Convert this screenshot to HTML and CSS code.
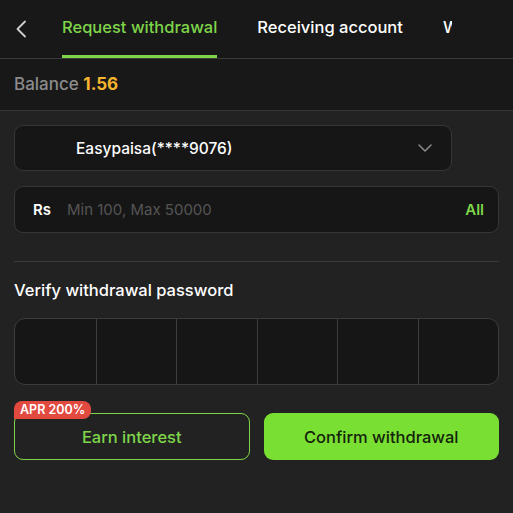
FILE: index.html
```html
<!DOCTYPE html>
<html lang="en">
<head>
  <meta charset="UTF-8">
  <title>Withdraw</title>
  <link rel="stylesheet" href="styles.css">
</head>
<body>

  <!-- Top tabs -->
  <div class="topbar">
    <div class="back">
      <svg width="12" height="18" viewBox="0 0 12 18"><path d="M10 1.5 L2.5 9 L10 16.5" fill="none" stroke="#cfcfcf" stroke-width="1.8" stroke-linecap="round" stroke-linejoin="round"/></svg>
    </div>
    <div class="tabs">
      <div class="tab active">Request withdrawal</div>
      <div class="tab">Receiving account</div>
      <div class="tab">Withdrawal records</div>
    </div>
  </div>

  <div class="balance">Balance <b>1.56</b></div>

  <div class="main">
    <div class="select">
      <span>Easypaisa(****9076)</span>
      <svg width="14" height="8" viewBox="0 0 14 8"><path d="M1 1 L7 7 L13 1" fill="none" stroke="#8a8a8a" stroke-width="1.5" stroke-linecap="round" stroke-linejoin="round"/></svg>
    </div>

    <div class="amount">
      <span class="cur">Rs</span>
      <span class="ph">Min 100, Max 50000</span>
      <span class="all">All</span>
    </div>

    <div class="divider"></div>

    <h3 class="label">Verify withdrawal password</h3>
    <div class="pin">
      <div></div><div></div><div></div><div></div><div></div><div></div>
    </div>

    <div class="actions">
      <button class="earn"><span class="badge">APR 200%</span>Earn interest</button>
      <button class="confirm">Confirm withdrawal</button>
    </div>
  </div>

</body>
</html>
```

FILE: styles.css
```css
body { margin: 0; background: #222222; font-family: Inter, "Noto Sans", sans-serif; color: #fff; }

.topbar { display: flex; height: 58px; background: #181818; border-bottom: 1px solid #3a3a3a; }
.back { width: 62px; display: flex; align-items: center; padding-left: 15px; box-sizing: border-box; }
.tabs { display: flex; gap: 40px; width: 390px; overflow: hidden; white-space: nowrap; }
.tab { font-size: 16.5px; font-weight: 500; line-height: 55px; border-bottom: 3px solid transparent; color: #fff; }
.tab.active { color: #7fd54a; border-bottom-color: #7fd54a; }

.balance { height: 51px; line-height: 51px; padding-left: 14px; background: #181818; border-bottom: 1px solid #353535; color: #8c8c8c; font-size: 17px; font-weight: 500; }
.balance b { color: #f7b52e; font-weight: 700; }

.main { padding: 14px 14px; }

.select { width: 438px; height: 46px; box-sizing: border-box; display: flex; align-items: center; justify-content: space-between; padding: 0 19px 0 61px; background: #161616; border: 1px solid #363636; border-radius: 9px; font-size: 15.5px; font-weight: 500; }

.amount { margin-top: 15px; height: 47px; box-sizing: border-box; display: flex; align-items: center; padding: 0 14px 0 18px; background: #161616; border: 1px solid #363636; border-radius: 9px; font-size: 15px; }
.amount .cur { font-weight: 600; width: 34px; }
.amount .ph { flex: 1; color: #555; }
.amount .all { color: #7fd54a; font-weight: 600; }

.divider { height: 1px; background: #3a3a3a; margin: 28px 0 0; }

.label { margin: 16px 0 16px; font-size: 16.5px; font-weight: 500; line-height: 24px; }

.pin { display: grid; grid-template-columns: repeat(6, 1fr); height: 67px; box-sizing: border-box; background: #161616; border: 1px solid #3c3c3c; border-radius: 11px; overflow: hidden; }
.pin div { border-left: 1px solid #3c3c3c; }
.pin div:first-child { border-left: none; }

.actions { display: grid; grid-template-columns: 1fr 1fr; gap: 14px; margin-top: 28px; }
.actions button { position: relative; height: 47px; border-radius: 9px; font-family: inherit; font-size: 16.5px; font-weight: 500; }
.earn { background: transparent; border: 1px solid #7fd54a; color: #7fd54a; }
.confirm { background: #79df33; border: none; color: #14240b; }
.badge { position: absolute; left: -1px; top: -13px; height: 18px; line-height: 18px; padding: 0 6px; background: #e2493f; color: #fff; font-size: 12.5px; font-weight: 600; border-radius: 8px 8px 8px 0; }
```
